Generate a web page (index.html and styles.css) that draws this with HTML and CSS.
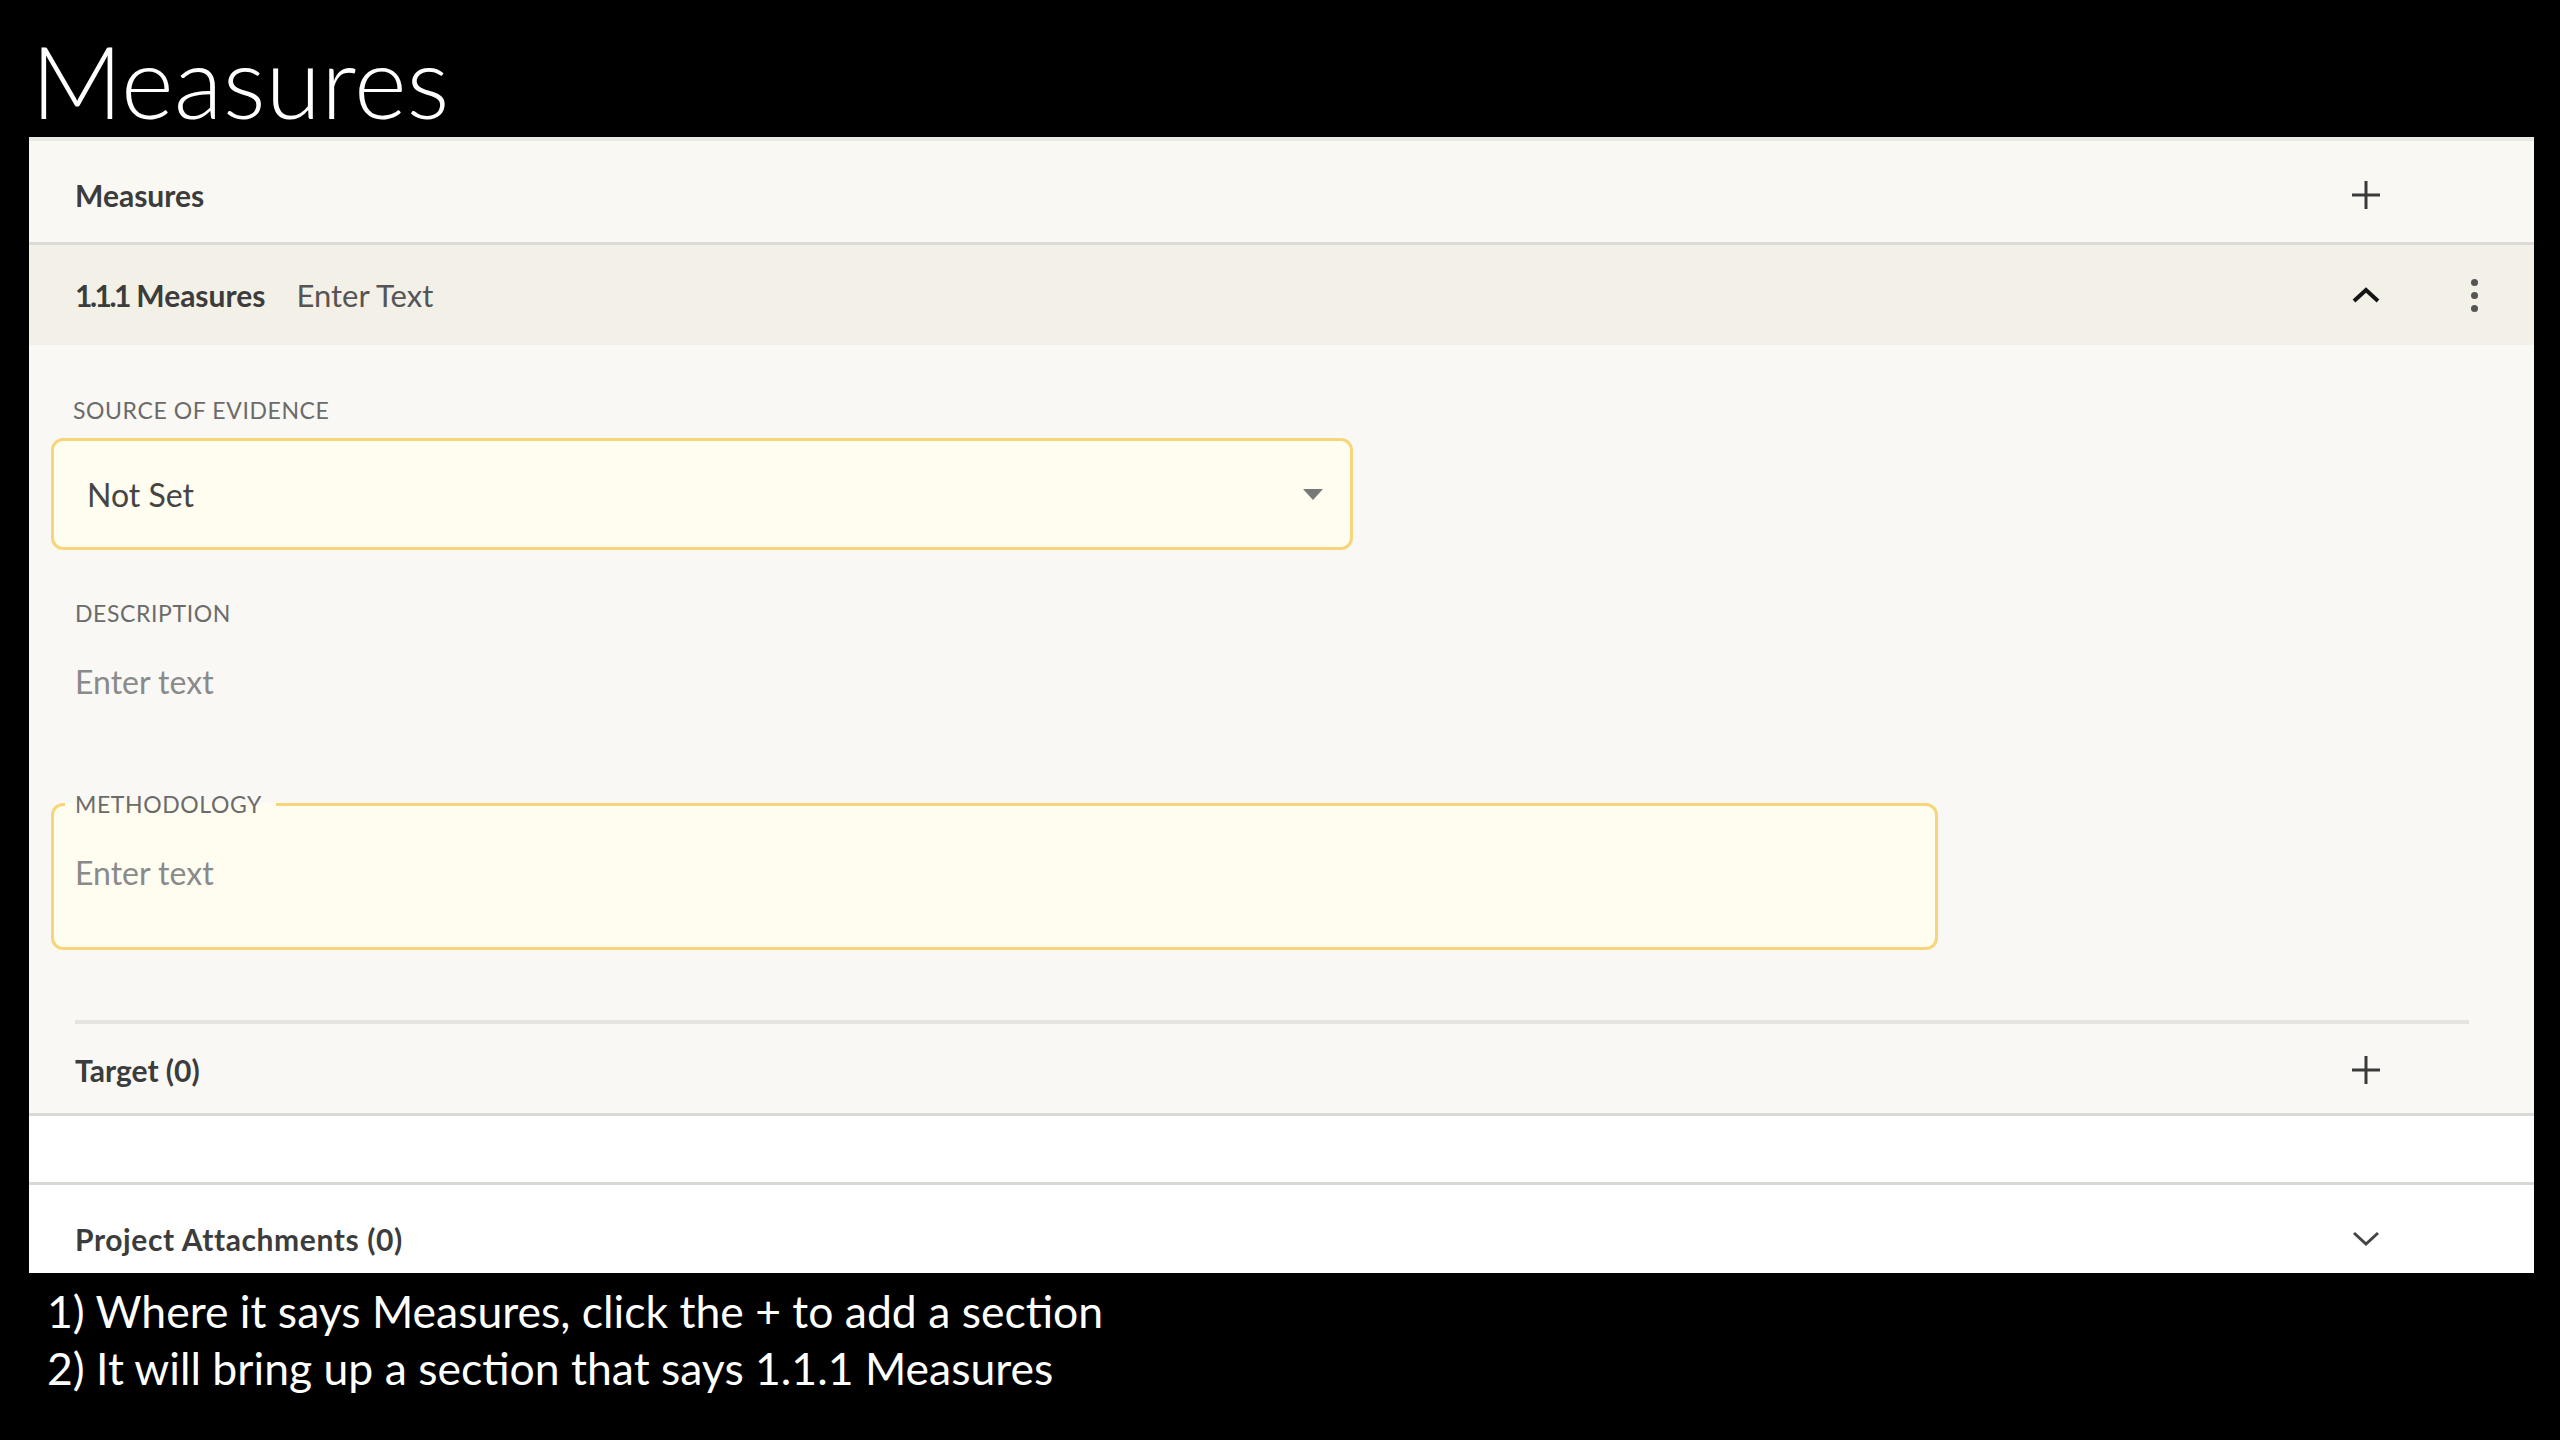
FILE: index.html
```html
<!DOCTYPE html>
<html lang="en">
<head>
<meta charset="utf-8">
<title>Measures</title>
<link rel="stylesheet" href="styles.css">
</head>
<body>
<h1 class="title">Measures</h1>
<div class="panel">
  <div class="row row-head">
    <span class="bold">Measures</span>
    <span class="icon-box">
      <svg width="30" height="30" viewBox="0 0 30 30"><path d="M15 1v28M1 15h28" stroke="#3a3a3a" stroke-width="3" fill="none"/></svg>
    </span>
  </div>
  <div class="row row-sub">
    <div class="sub-left">
      <span class="bold"><span class="num">1.1.1</span> Measures</span>
      <span class="reg">Enter Text</span>
    </div>
    <div class="sub-right">
      <span class="icon-box">
        <svg width="28" height="16" viewBox="0 0 28 16"><path d="M2 14L14 3l12 11" stroke="#151515" stroke-width="4" fill="none"/></svg>
      </span>
      <span class="icon-box kebab">
        <span class="dot"></span><span class="dot"></span><span class="dot"></span>
      </span>
    </div>
  </div>
  <div class="content">
    <div class="label first">SOURCE OF EVIDENCE</div>
    <div class="select">
      <span class="select-val">Not Set</span>
      <svg width="20" height="11" viewBox="0 0 20 11"><path d="M0 0h20L10 11z" fill="#787878"/></svg>
    </div>
    <div class="label desc">DESCRIPTION</div>
    <div class="placeholder desc-text">Enter text</div>
    <fieldset class="method">
      <legend class="label">METHODOLOGY</legend>
      <div class="placeholder method-text">Enter text</div>
    </fieldset>
    <div class="divider"></div>
    <div class="row row-target">
      <span class="bold">Target (0)</span>
      <span class="icon-box">
        <svg width="30" height="30" viewBox="0 0 30 30"><path d="M15 1v28M1 15h28" stroke="#3a3a3a" stroke-width="3" fill="none"/></svg>
      </span>
    </div>
  </div>
  <div class="gap"></div>
  <div class="row row-attach">
    <span class="bold wide">Project Attachments (0)</span>
    <span class="icon-box">
      <svg width="28" height="16" viewBox="0 0 28 16"><path d="M2 2l12 11L26 2" stroke="#444" stroke-width="3" fill="none"/></svg>
    </span>
  </div>
</div>
<div class="notes">
  <p>1) Where it says Measures, click the + to add a section</p>
  <p>2) It will bring up a section that says 1.1.1 Measures</p>
</div>
</body>
</html>
```
FILE: styles.css
```css
html, body {
  margin: 0;
  padding: 0;
  background: #000;
  width: 2560px;
  height: 1440px;
  overflow: hidden;
}
body {
  font-family: Lato, "Open Sans", sans-serif;
}
.title {
  margin: 0;
  height: 137px;
  box-sizing: border-box;
  padding: 20px 0 0 31px;
  font-size: 101px;
  font-weight: 300;
  line-height: 120px;
  color: #fff;
}
.panel {
  margin-left: 29px;
  width: 2505px;
  background: #f9f8f4;
  border-top: 4px solid #e8e8e4;
}
.row {
  display: flex;
  align-items: center;
  justify-content: space-between;
  box-sizing: border-box;
}
.bold {
  font-weight: 700;
  font-size: 30px;
  color: #3c3c3c;
}
.bold.wide {
  letter-spacing: 0.6px;
}
.num {
  letter-spacing: -2.5px;
}
.reg {
  font-size: 31px;
  color: #555;
}
.icon-box {
  width: 40px;
  height: 40px;
  display: flex;
  align-items: center;
  justify-content: center;
}
.row-head {
  height: 104px;
  padding: 6px 148px 0 46px;
  background: #f9f8f3;
  border-bottom: 3px solid #dcdbd6;
}
.row-sub {
  height: 100px;
  padding: 0 40px 0 46px;
  background: #f3f0e7;
}
.sub-left {
  display: flex;
  align-items: center;
  gap: 31px;
}
.sub-right {
  display: flex;
  align-items: center;
  gap: 68px;
}
.kebab {
  flex-direction: column;
  gap: 6px;
}
.dot {
  width: 7px;
  height: 7px;
  border-radius: 50%;
  background: #555;
}
.content {
  padding: 51px 0 0 0;
  background: #f9f8f4;
}
.label {
  font-size: 23px;
  line-height: 28px;
  color: #6b6b6b;
  letter-spacing: 0.6px;
}
.label.first {
  margin-left: 44px;
}
.select {
  margin: 14px 0 0 22px;
  width: 1302px;
  height: 112px;
  box-sizing: border-box;
  border: 3px solid #f7d67b;
  border-radius: 12px;
  background: #fffcf0;
  display: flex;
  align-items: center;
  justify-content: space-between;
  padding: 0 27px 0 33px;
}
.select-val {
  font-size: 32px;
  color: #444;
}
.label.desc {
  margin: 49px 0 0 46px;
}
.placeholder {
  font-size: 32px;
  line-height: 40px;
  color: #8a8a8a;
}
.desc-text {
  margin: 35px 0 0 46px;
}
.method {
  margin: 88px 0 0 22px;
  width: 1887px;
  box-sizing: border-box;
  border: 3px solid #f7d67b;
  border-radius: 12px;
  background: #fffcf0;
  padding: 0 11px 54px 11px;
  min-inline-size: 0;
}
.method legend {
  padding: 0 14px 0 10px;
}
.method-text {
  margin: 35px 0 0 10px;
}
.divider {
  margin: 70px 65px 0 46px;
  height: 4px;
  background: #e6e4de;
}
.row-target {
  height: 92px;
  padding: 2px 148px 0 46px;
  border-bottom: 3px solid #d8d8d4;
}
.gap {
  height: 66px;
  background: #fff;
  border-bottom: 3px solid #d8d8d4;
}
.row-attach {
  height: 88px;
  padding: 19px 148px 0 46px;
  background: #fff;
}
.notes {
  padding: 9px 0 0 47px;
  color: #fff;
  font-size: 44.5px;
  line-height: 57px;
}
.notes p {
  margin: 0;
}
```
